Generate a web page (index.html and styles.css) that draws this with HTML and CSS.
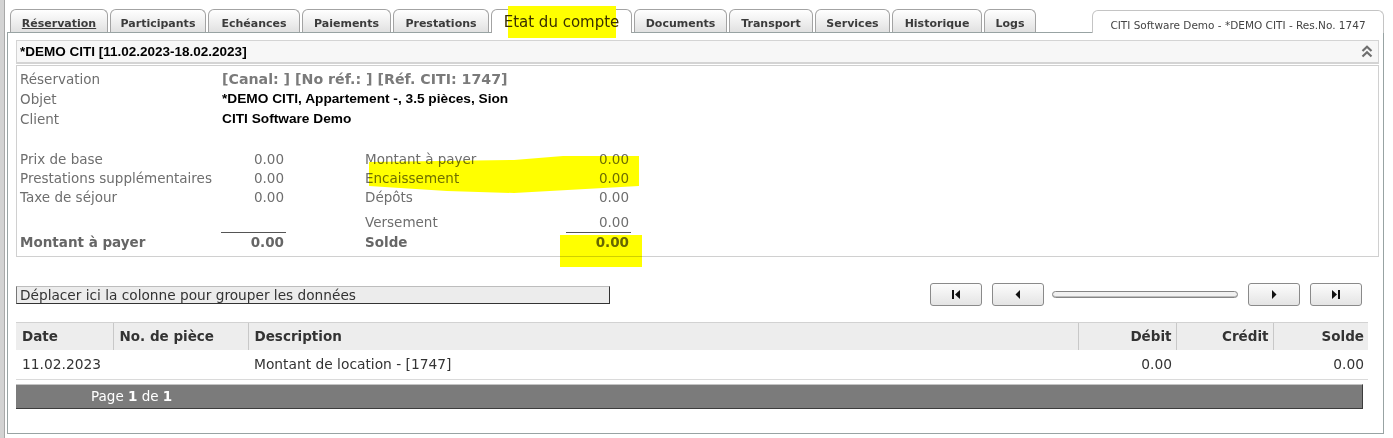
FILE: index.html
```html
<!DOCTYPE html>
<html>
<head>
  <title>Etat du compte</title>
  <link rel="stylesheet" href="styles.css">
</head>
<body>
  <div class="app">
    <div class="side-strip"></div>
    <div class="workspace">
      <div class="tabbar">
        <div class="tab t-res"><span class="current">Réservation</span></div>
        <div class="tab t-part">Participants</div>
        <div class="tab t-ech">Echéances</div>
        <div class="tab t-pai">Paiements</div>
        <div class="tab t-pre">Prestations</div>
        <div class="tab active"><span class="marker">Etat du compte</span></div>
        <div class="tab t-doc">Documents</div>
        <div class="tab t-tra">Transport</div>
        <div class="tab t-ser">Services</div>
        <div class="tab t-his">Historique</div>
        <div class="tab t-log">Logs</div>
        <div class="title-tab">CITI Software Demo - *DEMO CITI - Res.No. 1747</div>
      </div>

      <div class="panel">
        <div class="res-header">
          <span class="res-title">*DEMO CITI [11.02.2023-18.02.2023]</span>
          <svg class="collapse" width="12" height="13" viewBox="0 0 12 13">
            <polyline points="1.5,6 6,1.8 10.5,6" fill="none" stroke="#6f6f6f" stroke-width="2.2" />
            <polyline points="1.5,11.5 6,7.3 10.5,11.5" fill="none" stroke="#6f6f6f" stroke-width="2.2" />
          </svg>
        </div>

        <div class="res-info">
          <div class="info-grid">
            <span class="label">Réservation</span>
            <span class="ref">[Canal: ] [No réf.: ] [Réf. CITI: 1747]</span>
            <span class="label">Objet</span>
            <span class="strong">*DEMO CITI, Appartement -, 3.5 pièces, Sion</span>
            <span class="label">Client</span>
            <span class="strong">CITI Software Demo</span>
          </div>

          <div class="money">
            <div class="money-col">
              <span>Prix de base</span><span class="num">0.00</span>
              <span>Prestations supplémentaires</span><span class="num">0.00</span>
              <span>Taxe de séjour</span><span class="num">0.00</span>
              <span class="sub">&nbsp;</span><span class="num sub rule">&nbsp;</span>
              <span class="total">Montant à payer</span><span class="num total">0.00</span>
            </div>
            <div class="money-col">
              <span>Montant à payer</span><span class="num">0.00</span>
              <span>Encaissement</span><span class="num">0.00</span>
              <span>Dépôts</span><span class="num">0.00</span>
              <span class="sub">Versement</span><span class="num sub rule">0.00</span>
              <span class="total">Solde</span><span class="num total">0.00</span>
            </div>
          </div>

          <!-- highlighter marks drawn over the figures -->
          <svg class="mark mark-rows" width="270" height="37" viewBox="0 0 270 37">
            <polygon points="0,6 145,4 194,0 270,0 270,30 145,37 78,35 0,30" fill="#ffff00" />
          </svg>
          <div class="mark mark-solde"></div>
        </div>

        <div class="toolbar">
          <div class="group-panel">Déplacer ici la colonne pour grouper les données</div>
          <div class="pager">
            <button class="pg-btn" type="button">
              <svg width="10" height="9" viewBox="0 0 10 9"><rect x="1" y="0" width="2" height="9" fill="#111" /><polygon points="9,0 4,4.5 9,9" fill="#111" /></svg>
            </button>
            <button class="pg-btn" type="button">
              <svg width="10" height="9" viewBox="0 0 10 9"><polygon points="7,0 2.5,4.5 7,9" fill="#111" /></svg>
            </button>
            <div class="track"></div>
            <button class="pg-btn" type="button">
              <svg width="10" height="9" viewBox="0 0 10 9"><polygon points="3,0 7.5,4.5 3,9" fill="#111" /></svg>
            </button>
            <button class="pg-btn" type="button">
              <svg width="10" height="9" viewBox="0 0 10 9"><polygon points="1,0 6,4.5 1,9" fill="#111" /><rect x="7" y="0" width="2" height="9" fill="#111" /></svg>
            </button>
          </div>
        </div>

        <table class="grid">
          <colgroup>
            <col class="c-date">
            <col class="c-piece">
            <col class="c-desc">
            <col class="c-amount">
            <col class="c-amount2">
            <col class="c-solde">
          </colgroup>
          <thead>
            <tr>
              <th>Date</th>
              <th>No. de pièce</th>
              <th>Description</th>
              <th class="right">Débit</th>
              <th class="right">Crédit</th>
              <th class="right">Solde</th>
            </tr>
          </thead>
          <tbody>
            <tr>
              <td>11.02.2023</td>
              <td></td>
              <td>Montant de location - [1747]</td>
              <td class="right">0.00</td>
              <td class="right"></td>
              <td class="right">0.00</td>
            </tr>
          </tbody>
        </table>

        <div class="grid-footer">Page <b>1</b> de <b>1</b></div>
      </div>
    </div>
  </div>
</body>
</html>
```

FILE: styles.css
```css
* {
  box-sizing: border-box;
}

body {
  margin: 0;
  background: #fff;
  font-family: "DejaVu Sans", Verdana, sans-serif;
  font-size: 13.5px;
  color: #333;
}

.app {
  display: flex;
  height: 438px;
}

.side-strip {
  width: 5px;
  background: #d3d3d3;
  border-right: 1px solid #a8a8a8;
}

.workspace {
  width: 1377px;
  margin-left: 2px;
  padding-top: 9px;
}

/* tabs */
.tabbar {
  display: flex;
  align-items: flex-start;
  gap: 2px;
  padding-left: 3px;
  margin-bottom: -1px;
  position: relative;
  z-index: 1;
}

.tab {
  flex: 0 0 auto;
  height: 23px;
  padding-top: 5px;
  line-height: 17px;
  border: 1px solid #a3a3a3;
  border-bottom: 0;
  border-radius: 6px 6px 0 0;
  background: linear-gradient(#ffffff, #e1e1e1);
  font-size: 11px;
  font-weight: bold;
  color: #3b3b3b;
  text-align: center;
  white-space: nowrap;
}

.t-res { width: 98px; }
.t-part { width: 96px; }
.t-ech { width: 92px; }
.t-pai { width: 89px; }
.t-pre { width: 96px; }
.t-doc { width: 93px; }
.t-tra { width: 84px; }
.t-ser { width: 75px; }
.t-his { width: 90px; }
.t-log { width: 52px; }

.tab .current {
  text-decoration: underline;
}

.tab.active {
  width: 141px;
  height: 24px;
  padding-top: 3px;
  line-height: 19px;
  background: #fff;
  font-size: 15px;
  font-weight: normal;
  color: #3a3000;
}

.marker {
  padding: 7px 0;
  background: linear-gradient(to right, transparent 4px, #ffff00 4px, #ffff00 calc(100% - 3px), transparent calc(100% - 3px));
}

.title-tab {
  margin-left: auto;
  margin-top: 1px;
  width: 292px;
  height: 23px;
  padding-top: 7px;
  line-height: 14px;
  border: 1px solid #c4c4c4;
  border-bottom: 0;
  border-radius: 6px 6px 0 0;
  background: #fff;
  font-size: 10.5px;
  color: #444;
  text-align: center;
  white-space: nowrap;
}

/* main panel */
.panel {
  border: 1px solid #98a3a3;
  padding: 7px 4px 24px 8px;
  background: #fff;
}

.res-header {
  display: flex;
  justify-content: space-between;
  align-items: center;
  height: 24px;
  padding: 0 5px 0 3px;
  border: 1px solid #d4d4d4;
  border-bottom-width: 2px;
  background: #f7f7f7;
}

.res-title {
  font-family: "Liberation Sans", Arial, sans-serif;
  font-size: 13.5px;
  font-weight: bold;
  color: #000;
}

.res-info {
  position: relative;
  margin-top: 1px;
  padding: 3px 0 4px 3px;
  border: 1px solid #d0d0d0;
}

.info-grid {
  display: grid;
  grid-template-columns: 202px auto;
  line-height: 20px;
  color: #6e6e6e;
}

.info-grid .ref {
  font-size: 14.2px;
  font-weight: bold;
  color: #7a7a7a;
}

.info-grid .strong {
  font-family: "Liberation Sans", Arial, sans-serif;
  font-size: 13.7px;
  font-weight: bold;
  color: #000;
}

.money {
  display: flex;
  gap: 79px;
  margin-top: 21px;
}

.money-col {
  display: grid;
  grid-template-columns: 201px 65px;
  line-height: 19px;
  color: #6e6e6e;
  white-space: nowrap;
}

.num {
  text-align: right;
  padding-right: 2px;
}

.sub {
  margin-top: 6px;
}

.rule {
  border-bottom: 1px solid #555;
}

.total {
  font-weight: bold;
  color: #666;
}

.mark {
  position: absolute;
  mix-blend-mode: multiply;
}

.mark-rows {
  left: 352px;
  top: 90px;
}

.mark-solde {
  left: 543px;
  top: 169px;
  width: 82px;
  height: 32px;
  background: #ffff00;
}

/* grid toolbar */
.toolbar {
  display: flex;
  align-items: center;
  height: 23px;
  margin-top: 26px;
}

.group-panel {
  width: 594px;
  height: 18px;
  padding-left: 3px;
  line-height: 16px;
  border: 1px solid;
  border-color: #bdbdbd #333 #333 #777;
  background: #ececec;
  font-size: 13.7px;
  color: #333;
}

.pager {
  display: flex;
  align-items: center;
  margin-left: auto;
  margin-right: 17px;
}

.pg-btn {
  display: flex;
  align-items: center;
  justify-content: center;
  width: 52px;
  height: 23px;
  padding: 0;
  border: 1px solid #8a8a8a;
  border-radius: 3px;
  background: linear-gradient(#fcfcfc, #e4e4e4);
}

.pg-btn + .pg-btn {
  margin-left: 10px;
}

.track {
  width: 186px;
  height: 7px;
  margin: 0 10px 0 8px;
  border: 1px solid #858585;
  border-radius: 4px;
  background: #f1f1f1;
  box-shadow: inset 0 -1px 0 #bdbdbd;
}

/* data grid */
.grid {
  width: 1352px;
  margin-top: 16px;
  border-collapse: collapse;
  table-layout: fixed;
}

.c-date { width: 97px; }
.c-piece { width: 135px; }
.c-desc { width: 830px; }
.c-amount { width: 98px; }
.c-amount2 { width: 97px; }
.c-solde { width: 95px; }

.grid th {
  height: 27px;
  padding: 0 6px;
  border-top: 1px solid #d2d2d2;
  border-left: 1px solid #c8c8c8;
  background: #ededed;
  font-weight: bold;
  color: #333;
  text-align: left;
}

.grid th:first-child {
  border-left: 0;
}

.grid td {
  height: 30px;
  padding: 0 6px;
  border-bottom: 1px solid #dadada;
  font-size: 13.8px;
  color: #333;
  white-space: nowrap;
}

.grid .right {
  text-align: right;
  padding-right: 4px;
}

.grid-footer {
  width: 1347px;
  height: 25px;
  margin-top: 4px;
  padding-left: 75px;
  line-height: 23px;
  border-top: 1px solid #c4c4c4;
  border-bottom: 1px solid #3c3c3c;
  border-right: 1px solid #3c3c3c;
  background: #7b7b7b;
  font-size: 13.5px;
  color: #fff;
}
```
